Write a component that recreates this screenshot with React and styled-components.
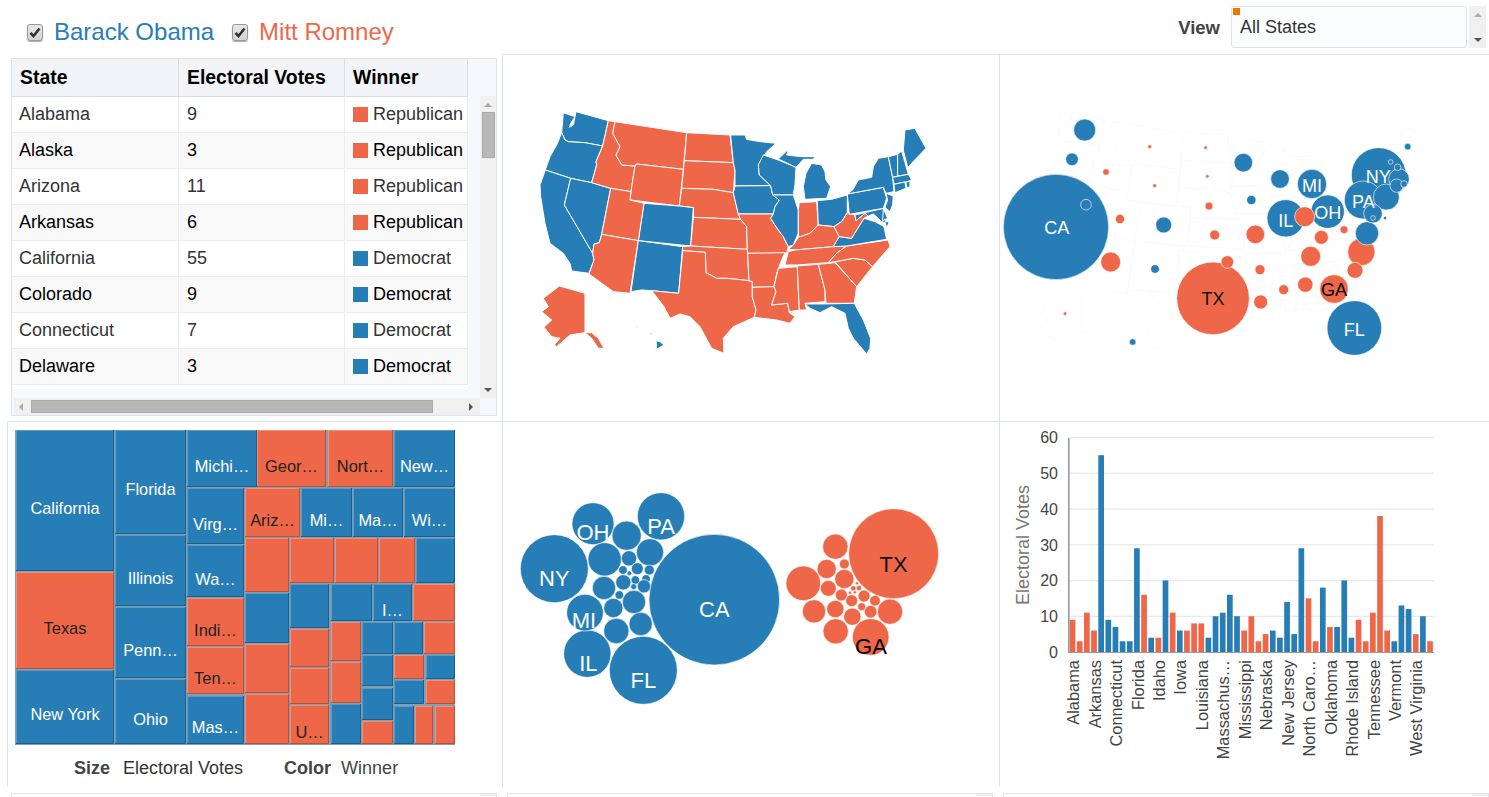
import React from 'react';
import styled, { createGlobalStyle } from 'styled-components';

const BLUE = '#277db5';
const RED = '#ef6749';
const LINE = '#dde3ea';

const Global = createGlobalStyle`
  html, body { margin: 0; padding: 0; background: #fff; overflow: hidden; }
  body { font-family: "Liberation Sans", Arial, sans-serif; color: #333; }
`;

const Page = styled.div`
  width: 1489px;
  height: 797px;
  overflow: hidden;
  display: flex;
  flex-direction: column;
`;

const Header = styled.header`
  height: 54px;
  flex: none;
  display: flex;
  justify-content: space-between;
  padding: 6px 3px 0 27px;
  box-sizing: border-box;
`;
const Legend = styled.div`
  display: flex;
  align-items: flex-start;
  padding-top: 12px;
`;
const CheckLabel = styled.label`
  display: flex;
  align-items: center;
  height: 28px;
  margin-right: 18px;
  font-size: 24px;
  color: ${p => p.$color};
`;
const Box = styled.span`
  width: 14px;
  height: 15px;
  margin-right: 11px;
  border: 1px solid #999;
  border-radius: 3px;
  background: linear-gradient(#e8e8e8, #d4d4d4);
  box-shadow: 0 1px 1px #aaa;
  display: flex;
  align-items: center;
  justify-content: center;
`;
const ViewGroup = styled.div`
  display: flex;
  align-items: flex-start;
`;
const ViewLabel = styled.span`
  font-size: 18.5px;
  font-weight: 700;
  color: #444;
  margin: 11px 11px 0 0;
`;
const SelectBox = styled.div`
  position: relative;
  width: 234px;
  height: 40px;
  border: 1px solid #dfe3e8;
  border-radius: 3px;
  background: #fbfdff;
  font-size: 18px;
  line-height: 41px;
  text-indent: 8px;
  color: #333;
  &::before {
    content: '';
    position: absolute;
    left: 1px;
    top: 1px;
    width: 7px;
    height: 7px;
    background: #ee7700;
  }
`;
const SelectScroll = styled.div`
  width: 17px;
  height: 42px;
  margin-left: 2px;
  background: #f0f0f0;
  display: flex;
  flex-direction: column;
  align-items: center;
  justify-content: space-between;
  padding: 7px 0 6px;
  box-sizing: border-box;
`;
const Arrow = styled.i`
  display: block;
  width: 0;
  height: 0;
  border-style: solid;
  border-color: transparent;
  ${p => p.$dir === 'up' && `border-width: 0 4px 4px; border-bottom-color: ${p.$c};`}
  ${p => p.$dir === 'down' && `border-width: 4px 4px 0; border-top-color: ${p.$c};`}
  ${p => p.$dir === 'left' && `border-width: 4px 4px 4px 0; border-right-color: ${p.$c};`}
  ${p => p.$dir === 'right' && `border-width: 4px 0 4px 4px; border-left-color: ${p.$c};`}
`;

const Board = styled.main`
  flex: none;
  display: grid;
  grid-template-columns: 502px 497px 490px;
  grid-template-rows: 367px 366px;
`;
const TablePanel = styled.section`
  padding: 4px 5px 0 11px;
  box-sizing: border-box;
`;
const ChartPanel = styled.section`
  border-top: 1px solid ${LINE};
  border-left: 1px solid ${LINE};
  box-sizing: border-box;
  overflow: hidden;
  display: flex;
  flex-direction: column;
  ${p => p.$inset && 'margin-left: 7px;'}
`;
const Canvas = styled.svg`
  display: block;
  flex: none;
`;

const TableFrame = styled.div`
  height: 358px;
  border: 1px solid ${LINE};
  box-sizing: border-box;
  background: #f7f8fc;
  display: grid;
  grid-template-columns: 468px 16px;
  grid-template-rows: 339px 17px;
`;
const TableBody = styled.div`
  overflow: hidden;
  height: 330px;
  width: 456px;
  background: #fff;
`;
const GridRow = styled.div`
  display: grid;
  grid-template-columns: 167px 166px 123px;
  height: ${p => (p.$head ? 38 : 36)}px;
  box-sizing: border-box;
  background: ${p => (p.$head ? '#f2f4f8' : p.$alt ? '#f9f9fa' : '#fff')};
  border-bottom: 1px solid ${p => (p.$head ? '#d5dee6' : '#ededef')};
  color: ${p => (p.$alt || p.$head ? '#000' : '#333')};
  font-size: ${p => (p.$head ? 19.4 : 18)}px;
  font-weight: ${p => (p.$head ? 700 : 400)};
`;
const Cell = styled.div`
  display: flex;
  align-items: center;
  padding-left: ${p => (p.$lead ? 7 : 8)}px;
  white-space: nowrap;
  overflow: hidden;
  border-right: 1px solid ${p => (p.$head ? '#d5dee6' : '#ededef')};
`;
const Swatch = styled.span`
  width: 15px;
  height: 15px;
  margin-right: 5px;
  margin-top: -1px;
  flex: none;
  background: ${p => p.$color};
`;
const VBar = styled.div`
  margin-top: 37px;
  background: #f0f0f0;
  display: flex;
  flex-direction: column;
  align-items: center;
  padding-top: 7px;
  box-sizing: border-box;
  & > i:last-child { margin-top: auto; margin-bottom: 6px; }
`;
const VThumb = styled.div`
  width: 13px;
  height: 46px;
  margin-top: 5px;
  box-sizing: border-box;
  background: #b8b8b8;
  border: 1px solid #a9a9a9;
`;
const HBar = styled.div`
  margin-left: 2px;
  background: #f0f0f0;
  display: flex;
  align-items: center;
  padding: 0 7px 0 5px;
`;
const HThumb = styled.div`
  width: 402px;
  height: 13px;
  margin: 0 auto 0 8px;
  box-sizing: border-box;
  background: #b8b8b8;
  border: 1px solid #a9a9a9;
`;
const MapShape = styled.path`
  fill: ${p => p.$fill};
  stroke: #fff;
  stroke-width: 3;
  stroke-linejoin: round;
`;
const GhostShape = styled.path`
  fill: none;
  stroke: #fbfbfb;
  stroke-width: 3;
`;
const Dot = styled.circle`
  fill: ${p => p.$fill};
  stroke: #fff;
  stroke-width: 0.7;
  stroke-opacity: 0.9;
`;
const DotLabel = styled.text`
  font-family: "Liberation Sans", Arial, sans-serif;
  font-size: ${p => p.$size}px;
  fill: ${p => p.$fill};
  text-anchor: middle;
`;
const CellLabel = styled.text`
  font-family: "Liberation Sans", Arial, sans-serif;
  font-size: 16.4px;
  fill: ${p => p.$fill};
  text-anchor: middle;
`;
const AxisText = styled.text`
  font-family: "Liberation Sans", Arial, sans-serif;
  font-size: ${p => p.$size || 16}px;
  fill: ${p => p.$fill || '#444'};
  text-anchor: ${p => p.$anchor || 'end'};
`;
const SizeColor = styled.div`
  display: flex;
  padding: 4px 0 0 66px;
  font-size: 18px;
  color: #444;
`;
const Key = styled.b`
  margin-right: ${p => p.$gap}px;
`;
const Val = styled.span`
  margin-right: 41px;
  color: #333;
`;

const Stubs = styled.div`
  flex: none;
  display: grid;
  grid-template-columns: 486px 486px 486px;
  column-gap: 10px;
  padding: 6px 0 0 11px;
`;
const Stub = styled.div`
  height: 12px;
  box-sizing: border-box;
  border: 1px solid ${LINE};
  border-bottom: 0;
  display: flex;
  justify-content: flex-end;
  &::after {
    content: '';
    width: 16px;
    height: 12px;
    background: #f0f0f0;
  }
`;

const ROWS = [
  ['Alabama', 9, 'R'], ['Alaska', 3, 'R'], ['Arizona', 11, 'R'], ['Arkansas', 6, 'R'],
  ['California', 55, 'D'], ['Colorado', 9, 'D'], ['Connecticut', 7, 'D'], ['Delaware', 3, 'D'],
];

const R = RED, B = BLUE;
const STATES = [
  [B,'130,68 165,80 152,100 148,112 160,105 168,65 265,92 248,168 195,158 145,155 135,150 125,128'],
  [B,'125,128 135,150 145,155 195,158 248,168 228,215 230,225 215,278 152,265 76,240 90,200 110,165'],
  [B,'76,240 152,265 133,345 218,490 222,510 207,550 155,543 150,520 130,490 90,460 75,400 62,320 60,285'],
  [B,'152,265 215,278 272,295 245,433 238,458 222,462 218,490 133,345'],
  [R,'265,92 285,95 278,130 300,170 288,195 305,225 345,228 333,305 272,295 215,278 230,225 228,215 248,168'],
  [R,'285,95 500,128 490,238 350,222 345,228 305,225 288,195 300,170 278,130'],
  [R,'350,222 490,238 478,348 330,330 333,305 345,228'],
  [R,'500,128 630,135 640,218 493,212'],
  [R,'493,212 640,218 645,240 640,308 580,298 485,295'],
  [R,'485,295 580,298 640,308 655,372 662,388 520,382 520,353 478,348'],
  [B,'372,340 478,348 520,353 512,468 355,452'],
  [R,'272,295 333,305 330,330 372,340 355,452 245,433'],
  [R,'245,433 355,452 330,610 280,605 207,552 222,510 218,490 222,462 238,458'],
  [B,'355,452 488,470 476,610 395,602 365,600 333,605'],
  [R,'520,382 662,388 680,410 682,478 512,468'],
  [R,'488,470 512,468 682,478 687,572 650,568 620,565 590,565 558,548 556,487 488,482'],
  [R,'488,482 556,487 558,548 590,565 620,565 650,568 687,572 697,575 697,620 708,660 703,682 640,710 610,745 612,790 575,775 540,710 510,680 480,672 450,685 432,650 395,602 476,610'],
  [B,'632,135 675,135 680,148 720,155 768,160 740,185 715,225 718,255 752,287 645,288 645,240 640,218'],
  [B,'645,288 752,287 758,315 778,330 765,350 760,372 655,372 640,308'],
  [R,'655,372 760,372 752,385 775,420 790,440 805,470 800,490 683,490 682,478 680,410 662,388'],
  [R,'683,490 795,488 785,510 770,550 762,590 697,592 697,575 687,572'],
  [R,'697,592 762,590 768,605 755,645 803,640 808,668 825,680 810,700 770,690 703,682 708,660 697,620'],
  [B,'730,195 775,210 828,232 825,285 820,315 758,315 752,287 718,255 715,225'],
  [B,'775,207 805,178 800,195 845,200 885,200 880,208 850,208 828,232'],
  [B,'858,250 875,220 905,225 915,245 918,270 932,290 920,325 855,328 850,290'],
  [B,'758,315 820,315 835,360 835,430 820,465 805,470 790,440 775,420 752,385 760,372 765,350 778,330'],
  [R,'838,338 890,335 895,405 870,430 835,442 835,360'],
  [B,'892,332 935,328 982,315 982,368 965,395 942,410 895,405'],
  [R,'806,478 820,465 835,442 870,430 895,405 942,410 958,440 940,470 825,480'],
  [R,'795,525 805,485 825,480 940,470 980,468 950,490 925,518 830,525'],
  [R,'775,535 832,530 838,660 808,665 803,640 755,645 768,605 762,590'],
  [R,'832,528 895,523 915,600 915,635 855,640 860,660 838,660'],
  [R,'895,523 945,518 1010,590 1003,640 918,640 915,600'],
  [B,'855,642 918,642 1003,640 1030,690 1052,745 1050,775 1040,792 1000,745 985,715 975,670 935,650 900,668 870,655'],
  [R,'945,515 1000,505 1035,510 1058,530 1010,590'],
  [R,'925,518 950,490 980,468 1105,450 1110,470 1058,530 1035,510 1000,505 945,515'],
  [B,'940,470 958,440 995,445 1010,420 1032,385 1065,395 1078,402 1092,410 1100,448 980,468'],
  [R,'942,410 965,395 982,368 1005,375 1008,392 1035,370 1045,378 1032,385 1010,420 995,445 958,440'],
  [B,'1005,375 1090,355 1095,390 1103,400 1085,395 1075,385 1060,372 1045,378 1035,370 1008,392'],
  [B,'982,312 1090,292 1100,325 1090,355 988,373'],
  [B,'998,300 1015,270 1055,262 1060,230 1075,205 1105,200 1118,262 1122,305 1098,310 1090,292 982,312'],
  [B,'1105,200 1133,193 1133,258 1118,262'],
  [B,'1133,193 1145,183 1165,253 1133,258'],
  [B,'1150,180 1155,120 1185,115 1218,175 1170,225 1163,232'],
  [B,'1118,262 1165,253 1175,270 1160,275 1122,283'],
  [B,'1122,283 1155,276 1158,295 1125,308'],
  [B,'1158,276 1170,274 1170,290 1160,294'],
  [B,'1098,310 1120,318 1118,345 1110,365 1095,352 1103,330'],
  [B,'1090,355 1103,385 1088,392'],
  [B,'1095,395 1108,395 1100,415'],
  [R,'118,588 195,610 195,728 150,735 110,770 103,765 120,745 95,740 72,712 95,690 65,665 85,650 70,625'],
  [R,'195,728 215,728 235,745 252,775 235,775 215,745'],
  [B,'408,752 420,755 432,765 410,778'],
  [B,'388,728 398,730 394,734'],
  [B,'345,708 353,710 350,713'],
];
const toPath = pts => 'M' + pts.replace(/ /g, 'L') + 'Z';

const BUBBLES = [
  [168,381,158,B],[254,90,33,B],[216,178,19,B],[491,375,24,B],[465,507,13,B],[318,216,10,R],[360,357,14,R],[332,486,30,R],
  [449,140,6,R],[617,143,5.5,R],[464,257,6,R],[622,229,5.5,R],[627,318,12,R],[644,405,15,R],[730,188,28,B],[754,300,14,B],
  [766,403,28,R],[840,237,28,B],[936,252,44,B],[857,355,56,B],[983,335,50,B],[914,350,30,R],[1032,389,12,R],[964,412,21,R],
  [932,469,30,R],[780,509,15,R],[639,595,109,R],[682,486,19,R],[782,606,21,R],[851,569,15,R],[916,554,23,R],[1084,456,41,R],
  [1065,511,24,R],[1002,567,43,R],[1063,684,82,B],[1101,400,35,B],[1136,225,82,B],[1090,300,57,B],[1159,291,39,B],[1119,341,28,B],
  [1155,354,5,B],[1119,354,7,B],[1223,140,10,B],[1197,237,31,B],[1190,257,20,B],[1212,252,10,B],[1193,202,10,B],[1172,186,7,B],
  [195,641,5.5,R],[398,726,10,B],[258,314,16,B],
];
const BUBBLE_TEXT = [
  ['CA',170,403,'#fff'],['NY',1135,248,'#fff'],['MI',936,275,'#fff'],['OH',983,358,'#fff'],['IL',857,380,'#fff'],
  ['PA',1090,325,'#fff'],['TX',639,616,'#111'],['GA',1002,589,'#000'],['FL',1063,708,'#fff'],
];
const PACKED = [
  [613,389,196,B],[400,601,102,B],[133,296,102,B],[453,139,71,B],[249,161,63,B],[232,551,71,B],[225,428,55,B],
  [350,197,44,B],[420,247,41,B],[284,268,50,B],[282,354,35,B],[340,337,23,B],[357,265,23,B],[339,300,13,B],[382,296,18,B],
  [418,300,15,B],[376,330,13,B],[408,327,13,B],[402,349,20,B],[371,350,9,B],[358,310,7,B],[328,375,13,B],[372,396,35,B],
  [310,414,29,B],[392,462,35,B],[319,483,38,B],
  [1151,251,135,R],[1082,501,55,R],[880,340,52,R],[976,230,38,R],[950,297,29,R],[1003,282,15,R],[1003,327,29,R],[955,355,24,R],
  [912,424,35,R],[976,417,26,R],[977,484,38,R],[1027,440,26,R],[1140,425,38,R],[1082,425,19,R],[1095,392,16,R],[1062,378,18,R],
  [1025,392,18,R],[994,375,18,R],[1055,410,12,R],[1030,355,8,R],[1047,354,8,R],[1020,368,5,R],[1035,367,5,R],[1041,340,5,R],
];
const PACKED_TEXT = [
  ['CA',613,440,'#fff'],['FL',400,653,'#fff'],['NY',133,348,'#fff'],['PA',453,191,'#fff'],['OH',249,211,'#fff'],
  ['IL',235,603,'#fff'],['MI',222,475,'#fff'],['TX',1151,305,'#111'],['GA',1083,553,'#000'],
];

const TREE = [
  [47,150,341,574,B,'California',403],[47,576,341,866,R,'Texas',762],[47,870,341,1092,B,'New York',1020],
  [345,150,557,461,B,'Florida',345],[345,465,557,677,B,'Illinois',612],[345,681,557,893,B,'Penn…',828],[345,897,557,1092,B,'Ohio',1035],
  [561,150,770,322,B,'Michi…',277],[771,150,979,322,R,'Geor…',277],[983,150,1179,322,R,'Nort…',277],[1183,150,1364,322,B,'New…',277],
  [561,325,733,492,B,'Virg…',450],[735,325,899,470,R,'Ariz…',438],[903,325,1057,470,B,'Mi…',438],[1060,325,1210,470,B,'Ma…',438],[1213,325,1364,470,B,'Wi…',438],
  [561,496,733,650,B,'Wa…',615],[561,654,733,799,R,'Indi…',768],[561,802,733,943,R,'Ten…',912],[561,947,733,1092,B,'Mas…',1060],
  [735,474,867,637,R],[735,640,867,790,B],[735,793,867,938,R],[735,942,867,1092,R],
  [870,474,1002,610,R],[1005,474,1133,610,R],[1136,474,1246,610,R],[1249,474,1364,610,B],
  [870,613,988,745,B],[992,613,1115,722,B],[1118,613,1236,722,B,'I…',708],[1239,613,1364,722,R],
  [870,748,988,861,R],[870,864,988,972,R],[870,976,988,1092,R,'U…',1075],
  [992,726,1084,843,R],[992,847,1084,970,R],[992,973,1084,1092,B],
  [1087,726,1178,821,B],[1087,825,1178,919,B],[1087,923,1178,1019,B],[1087,1022,1178,1092,R],
  [1182,726,1268,821,B],[1272,726,1364,821,R],
  [1182,825,1273,898,R],[1277,825,1364,898,B],
  [1182,901,1273,973,B],[1277,901,1364,973,R],
  [1182,977,1241,1092,B],[1245,977,1300,1092,R],[1304,977,1364,1092,R],
];

const BARS = [
  [9,R],[3,R],[11,R],[6,R],[55,B],[9,B],[7,B],[3,B],[3,B],[29,B],[16,R],[4,B],[4,R],[20,B],[11,R],[6,B],[6,R],[8,R],[8,R],[4,B],
  [10,B],[11,B],[16,B],[10,B],[6,R],[10,R],[3,R],[5,R],[6,B],[4,B],[14,B],[5,B],[29,B],[15,R],[3,R],[18,B],[7,R],[7,B],[20,B],[4,B],
  [9,R],[3,R],[11,R],[38,R],[6,R],[3,B],[13,B],[12,B],[5,R],[10,B],[3,R],
];
const BAR_LABELS = ['Alabama','Arkansas','Connecticut','Florida','Idaho','Iowa','Louisiana','Massachus…','Mississippi','Nebraska','New Jersey','North Caro…','Oklahoma','Rhode Island','Tennessee','Vermont','West Virginia'];

const px = (v, o) => Math.round(v / 3 + o);

function Tick() {
  return (
    <svg width="12" height="11" viewBox="0 0 12 11">
      <path d="M1.5 6 L4.5 9 L10.5 1.5" fill="none" stroke="#333" strokeWidth="2.6" />
    </svg>
  );
}

function StateTable() {
  return (
    <TableFrame>
      <TableBody>
        <GridRow $head>
          <Cell $head>State</Cell>
          <Cell $head>Electoral Votes</Cell>
          <Cell $head>Winner</Cell>
        </GridRow>
        {ROWS.map(([name, votes, w], i) => (
          <GridRow key={name} $alt={i % 2 === 1}>
            <Cell $lead>{name}</Cell>
            <Cell>{votes}</Cell>
            <Cell>
              <Swatch $color={w === 'R' ? RED : BLUE} />
              {w === 'R' ? 'Republican' : 'Democrat'}
            </Cell>
          </GridRow>
        ))}
        <GridRow />
      </TableBody>
      <VBar>
        <Arrow $dir="up" $c="#aaa" />
        <VThumb />
        <Arrow $dir="down" $c="#555" />
      </VBar>
      <HBar>
        <Arrow $dir="left" $c="#aaa" />
        <HThumb />
        <Arrow $dir="right" $c="#555" />
      </HBar>
    </TableFrame>
  );
}

function StateMap() {
  return (
    <Canvas width="496" height="366" viewBox="503 55 496 366">
      <g transform="translate(520 90) scale(0.3333)">
        {STATES.map(([c, p], i) => <MapShape key={i} $fill={c} d={toPath(p)} />)}
      </g>
    </Canvas>
  );
}

function BubbleMap() {
  return (
    <Canvas width="489" height="366" viewBox="1000 55 489 366">
      <g transform="translate(1017 90) scale(0.3333)">
        {STATES.map(([, p], i) => <GhostShape key={i} d={toPath(p)} />)}
      </g>
      {BUBBLES.map(([x, y, r, c], i) => (
        <Dot key={i} cx={x / 3 + 1000} cy={y / 3 + 100} r={r / 3} $fill={c} />
      ))}
      {BUBBLE_TEXT.map(([t, x, y, c]) => (
        <DotLabel key={t} x={x / 3 + 1000} y={y / 3 + 100} $size={18} $fill={c}>{t}</DotLabel>
      ))}
    </Canvas>
  );
}

function Treemap() {
  return (
    <Canvas width="494" height="332" viewBox="8 422 494 332">
      <rect x="15" y="430" width="440" height="315" fill="#7f9fb5" />
      {TREE.map(([x0, y0, x1, y1, c, t, b], i) => {
        const x = px(x0, 0), y = px(y0, 380), w = px(x1, 0) - x, h = px(y1, 380) - y;
        return (
          <g key={i}>
            <rect x={x} y={y} width={w} height={h} fill={c === B ? '#1d5f8c' : '#b9523b'} />
            <rect x={x} y={y} width={w - 1} height={h - 1} fill={c === B ? '#5a9ac6' : '#f58e77'} />
            <rect x={x + 1} y={y + 1} width={w - 2} height={h - 2} fill={c} />
            {t && <CellLabel x={x + w / 2} y={b / 3 + 380} $fill={c === B ? '#fff' : '#222'}>{t}</CellLabel>}
          </g>
        );
      })}
    </Canvas>
  );
}

function PackedBubbles() {
  return (
    <Canvas width="496" height="365" viewBox="503 422 496 365">
      {PACKED.map(([x, y, r, c], i) => (
        <Dot key={i} cx={x / 3 + 510} cy={y / 3 + 470} r={r / 3} $fill={c} />
      ))}
      {PACKED_TEXT.map(([t, x, y, c]) => (
        <DotLabel key={t} x={x / 3 + 510} y={y / 3 + 470} $size={22} $fill={c}>{t}</DotLabel>
      ))}
    </Canvas>
  );
}

function BarChart() {
  const base = 652;
  const unit = 3.578;
  return (
    <Canvas width="489" height="365" viewBox="1000 422 489 365">
      {[60, 50, 40, 30, 20, 10].map(v => (
        <rect key={v} x="1069" y={base - v * unit - 0.5} width="365" height="1.2" fill="#e4e8ec" />
      ))}
      {[60, 50, 40, 30, 20, 10, 0].map(v => (
        <AxisText key={v} x="1058" y={base - v * unit + 6}>{v}</AxisText>
      ))}
      {BARS.map(([v, c], i) => (
        <rect key={i} x={1069.7 + i * 7.15} y={base - v * unit} width="5.7" height={v * unit} fill={c} />
      ))}
      <rect x="1068" y="438" width="1.6" height="215" fill="#999" />
      <rect x="1068" y="652" width="366" height="1" fill="#999" />
      <AxisText $anchor="middle" $size={18} $fill="#777" transform="translate(1029 545) rotate(-90)">Electoral Votes</AxisText>
      {BAR_LABELS.map((t, i) => (
        <AxisText key={t} $size={16.4} transform={`translate(${1079.2 + i * 21.45} 660) rotate(-90)`}>{t}</AxisText>
      ))}
    </Canvas>
  );
}

export default function App() {
  return (
    <Page>
      <Global />
      <Header>
        <Legend>
          <CheckLabel $color={BLUE}><Box><Tick /></Box>Barack Obama</CheckLabel>
          <CheckLabel $color={RED}><Box><Tick /></Box>Mitt Romney</CheckLabel>
        </Legend>
        <ViewGroup>
          <ViewLabel>View</ViewLabel>
          <SelectBox>All States</SelectBox>
          <SelectScroll>
            <Arrow $dir="up" $c="#aaa" />
            <Arrow $dir="down" $c="#555" />
          </SelectScroll>
        </ViewGroup>
      </Header>
      <Board>
        <TablePanel><StateTable /></TablePanel>
        <ChartPanel><StateMap /></ChartPanel>
        <ChartPanel><BubbleMap /></ChartPanel>
        <ChartPanel $inset>
          <Treemap />
          <SizeColor>
            <Key $gap={13}>Size</Key><Val>Electoral Votes</Val>
            <Key $gap={10}>Color</Key><span>Winner</span>
          </SizeColor>
        </ChartPanel>
        <ChartPanel><PackedBubbles /></ChartPanel>
        <ChartPanel><BarChart /></ChartPanel>
      </Board>
      <Stubs><Stub /><Stub /><Stub /></Stubs>
    </Page>
  );
}
